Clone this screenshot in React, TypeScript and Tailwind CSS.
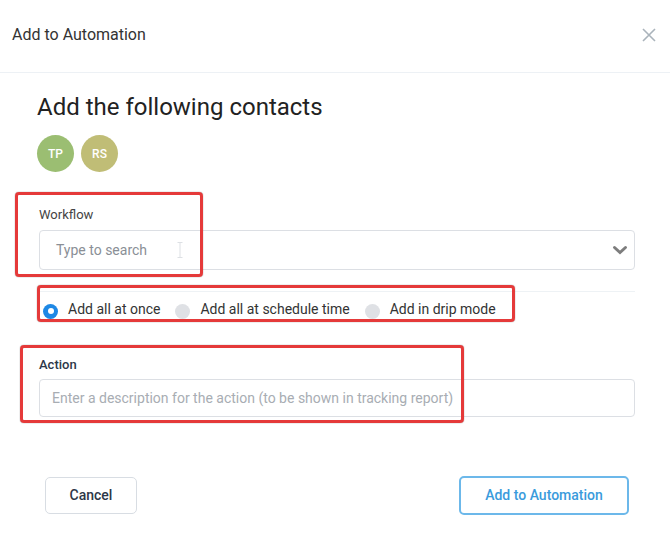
import React from "react";

const avatars = [
  { initials: "TP", color: "bg-[#9bbe72]" },
  { initials: "RS", color: "bg-[#c0bd76]" },
];

const modes = [
  { label: "Add all at once", checked: true },
  { label: "Add all at schedule time", checked: false },
  { label: "Add in drip mode", checked: false },
];

export default function App() {
  return (
    <div
      className="relative w-[670px] h-[542px] bg-white overflow-hidden"
      style={{ fontFamily: "Roboto, 'Liberation Sans', sans-serif" }}
    >
      {/* Header */}
      <div className="h-[73px] border-b border-[#edf1f5] flex items-center justify-between pl-3 pr-[14px]">
        <h2 className="text-[16px] text-[#333] -mt-[3px]">Add to Automation</h2>
        <button className="text-[#aab3bb] -mt-[2px]">
          <svg width="14" height="14" viewBox="0 0 14 14" fill="none" stroke="currentColor" strokeWidth="1.6">
            <path d="M1 1l12 12M13 1L1 13" />
          </svg>
        </button>
      </div>

      {/* Body */}
      <div className="pt-[19px]">
        <h1 className="pl-[37px] text-[24px] leading-[30px] text-[#222] font-normal">
          Add the following contacts
        </h1>
        <div className="pl-[37px] mt-[13px] flex gap-[7px]">
          {avatars.map((a) => (
            <div
              key={a.initials}
              className={`w-[37px] h-[37px] rounded-full ${a.color} flex items-center justify-center text-white text-[12px] font-medium`}
            >
              {a.initials}
            </div>
          ))}
        </div>

        {/* Workflow */}
        <div className="pr-[35px] mt-[35px] pl-[39px]">
          <label className="block text-[13px] leading-4 text-[#444]">Workflow</label>
          <div className="mt-[7px] h-[40px] w-[596px] border border-[#dcdfe4] rounded-[4px] flex items-center justify-between pl-[16px] pr-[6px]">
            <span className="text-[14px] text-[#8a8f96]">Type to search</span>
            <span className="absolute left-[177px] top-[242px] w-[5px] h-[16px] text-[#dde0e4]">
              <svg width="6" height="16" viewBox="0 0 6 16" fill="none" stroke="currentColor" strokeWidth="1">
                <path d="M0.5 0.5h5M3 0.5v15M0.5 15.5h5" />
              </svg>
            </span>
            <svg width="16" height="12" viewBox="0 0 16 12" fill="none" stroke="#7d7d7d" strokeWidth="3" strokeLinecap="round">
              <path d="M2.5 3.5l5.5 5 5.5-5" />
            </svg>
          </div>
          <div className="mt-[21px] w-[596px] border-t border-[#eef2f5]" />

          {/* Radio row */}
          <div className="mt-[7px] flex items-center pl-[4px] text-[14px] text-[#333]">
            {modes.map((m) => (
              <label key={m.label} className="flex items-center mr-[15px]">
                {m.checked ? (
                  <span className="w-[15px] h-[15px] rounded-full bg-[#1e88e5] flex items-center justify-center mt-[3px]">
                    <span className="w-[6px] h-[6px] rounded-full bg-white" />
                  </span>
                ) : (
                  <span className="w-[15px] h-[15px] rounded-full bg-[#dfe1e5] mt-[3px]" />
                )}
                <span className="ml-[10px]">{m.label}</span>
              </label>
            ))}
          </div>

          {/* Action */}
          <label className="block mt-[37px] text-[13px] leading-4 font-medium text-[#2d3748]">Action</label>
          <div className="mt-[6px] h-[38px] w-[596px] border border-[#dcdfe4] rounded-[4px] flex items-center pl-[12px]">
            <span className="text-[14px] text-[#a8adb3]">
              Enter a description for the action (to be shown in tracking report)
            </span>
          </div>
        </div>

        {/* Footer buttons */}
        <div className="mt-[60px] flex justify-between pl-[45px] pr-[41px]">
          <button className="w-[92px] h-[37px] border border-[#d8dde3] rounded-[5px] text-[14px] font-medium text-[#2d3748]">
            Cancel
          </button>
          <button className="w-[170px] h-[39px] border-2 border-[#6cb8ea] rounded-[5px] text-[14px] font-medium text-[#3a9bdc] -mt-[1px]">
            Add to Automation
          </button>
        </div>
      </div>

      {/* Annotation boxes */}
      <div className="absolute left-[15px] top-[192px] w-[188px] h-[85px] border-[3px] border-[#e53a3a] rounded-[4px] shadow-[0_0_1px_#555]" />
      <div className="absolute left-[37px] top-[285px] w-[478px] h-[37px] border-[3px] border-[#e53a3a] rounded-[4px] shadow-[0_0_1px_#555]" />
      <div className="absolute left-[20px] top-[345px] w-[444px] h-[78px] border-[3px] border-[#e53a3a] rounded-[4px] shadow-[0_0_1px_#555]" />
    </div>
  );
}
